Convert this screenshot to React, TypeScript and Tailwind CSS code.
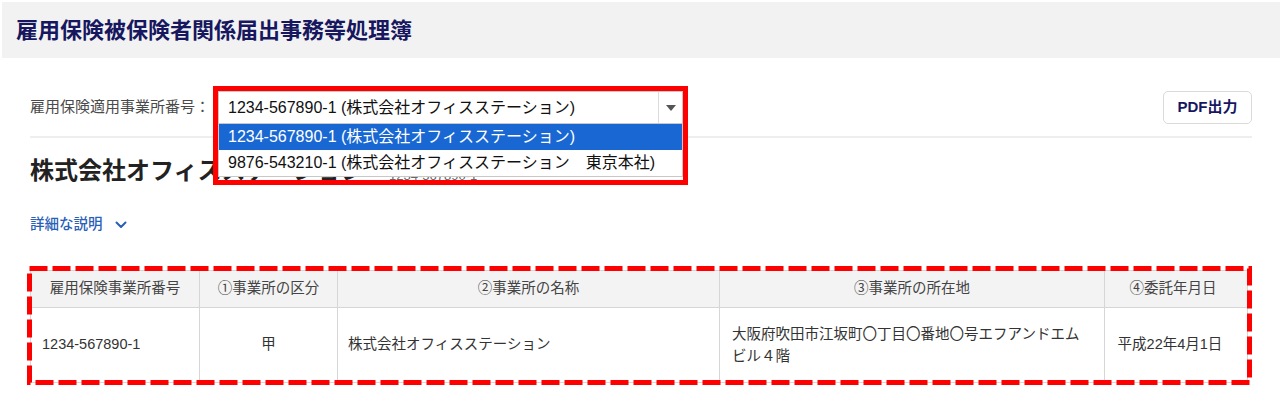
import React from "react";

const F = "font-['Liberation_Sans','Noto_Sans_CJK_JP',sans-serif]";

export default function App() {
  return (
    <div className={`w-[1280px] h-[402px] bg-white overflow-hidden ${F} text-[#333]`}>
      <div className="ml-[2px] mt-[2px] h-[56px] bg-[#f2f2f2] flex items-center pl-[14px]">
        <h1 className="text-[22px] font-bold text-[#17175f]">
          雇用保険被保険者関係届出事務等処理簿
        </h1>
      </div>

      <div className="pl-[30px] pr-[28px]">
        <div className="mt-[33px] flex items-center justify-between h-[33px]">
          <div className="flex items-center">
            <span className="text-[15px] text-[#4a4a4a] w-[188px]">雇用保険適用事業所番号：</span>
            <div className="relative">
              <div className="w-[465px] h-[33px] border border-[#c8c8c8] bg-white flex">
                <div className="flex-1 flex items-center pl-[9px] text-[16px] text-[#111]">
                  1234-567890-1 (株式会社オフィスステーション)
                </div>
                <div className="w-[24px] border-l border-[#dcdcdc] flex items-center justify-center">
                  <div className="w-0 h-0 border-l-[5px] border-r-[5px] border-t-[6px] border-l-transparent border-r-transparent border-t-[#555]" />
                </div>
              </div>
              <div className="absolute left-0 top-[33px] w-[465px] bg-white border border-[#c8c8c8] border-t-0 z-10">
                <div className="h-[26px] bg-[#1967d2] text-white text-[16px] flex items-center pl-[9px]">
                  1234-567890-1 (株式会社オフィスステーション)
                </div>
                <div className="h-[26px] text-[#111] text-[16px] flex items-center pl-[9px]">
                  9876-543210-1 (株式会社オフィスステーション　東京本社)
                </div>
              </div>
              <div className="absolute left-[-5px] top-[-5px] w-[475px] h-[99px] border-[5px] border-[#ff0000] z-20 pointer-events-none" />
            </div>
          </div>
          <button className="w-[89px] h-[33px] rounded-[5px] border border-[#dadada] bg-white text-[15px] font-bold text-[#17175f]">
            PDF出力
          </button>
        </div>

        <div className="mt-[12px] h-[2px] bg-[#eeeeee]" />

        <div className="mt-[18px] flex items-end gap-[24px]">
          <h2 className="text-[24px] font-bold text-[#222] leading-[30px]">株式会社オフィスステーション</h2>
          <span className="text-[13px] text-[#666] leading-[20px]">1234-567890-1</span>
        </div>

        <div className="mt-[28px] flex items-center gap-[12px] text-[14.5px] text-[#2a5fb8] font-medium">
          <span>詳細な説明</span>
          <svg width="12" height="8" viewBox="0 0 12 8" fill="none">
            <path d="M1.5 1.5 L6 6 L10.5 1.5" stroke="#2a5fb8" strokeWidth="2" strokeLinecap="round" strokeLinejoin="round" />
          </svg>
        </div>

        <div className="relative mt-[34px] w-[1217px]">
          <table className="w-[1217px] border-collapse text-[14.5px] text-[#333] table-fixed">
            <colgroup>
              <col className="w-[169px]" />
              <col className="w-[138px]" />
              <col className="w-[382px]" />
              <col className="w-[385px]" />
              <col className="w-[143px]" />
            </colgroup>
            <thead>
              <tr className="bg-[#f3f3f3] h-[37px]">
                <th className="border border-[#d6d6d6] font-normal text-[#444] text-center">雇用保険事業所番号</th>
                <th className="border border-[#d6d6d6] font-normal text-[#444] text-center">①事業所の区分</th>
                <th className="border border-[#d6d6d6] font-normal text-[#444] text-center">②事業所の名称</th>
                <th className="border border-[#d6d6d6] font-normal text-[#444] text-center">③事業所の所在地</th>
                <th className="border border-[#d6d6d6] font-normal text-[#444] text-center pr-[6px]">④委託年月日</th>
              </tr>
            </thead>
            <tbody>
              <tr className="h-[75px]">
                <td className="border border-[#d6d6d6] px-[11px]">1234-567890-1</td>
                <td className="border border-[#d6d6d6] text-center">甲</td>
                <td className="border border-[#d6d6d6] px-[10px]">株式会社オフィスステーション</td>
                <td className="border border-[#d6d6d6] px-[12px] leading-[22px]">
                  大阪府吹田市江坂町〇丁目〇番地〇号エフアンドエム
                  <br />
                  ビル４階
                </td>
                <td className="border border-[#d6d6d6] text-center pr-[12px]">平成22年4月1日</td>
              </tr>
            </tbody>
          </table>
          <svg
            className="absolute left-[-3px] top-[-4px] pointer-events-none"
            width="1225"
            height="119"
            viewBox="0 0 1225 119"
          >
            <rect x="2.5" y="2.5" width="1220" height="114" fill="none" stroke="#ff0000" strokeWidth="5" strokeDasharray="18 5" />
          </svg>
        </div>
      </div>
    </div>
  );
}
